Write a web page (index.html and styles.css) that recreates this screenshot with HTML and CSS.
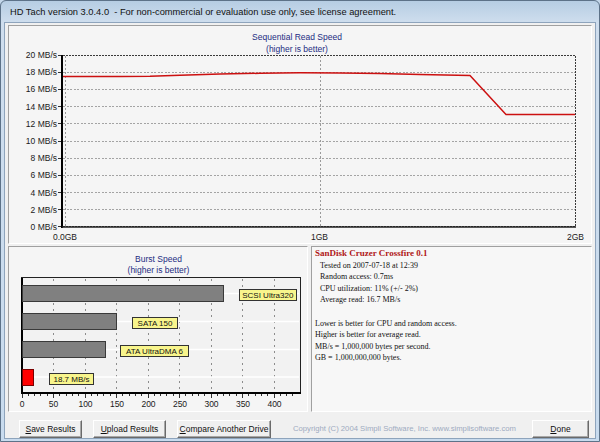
FILE: index.html
```html
<!DOCTYPE html>
<html>
<head>
<meta charset="utf-8">
<link rel="stylesheet" href="styles.css">
</head>
<body>
<div class="window">
  <div class="titlebar">HD Tach version 3.0.4.0 &nbsp;- For non-commercial or evaluation use only, see license agreement.</div>
  <div class="client">
    <div class="panel seq-panel">
      <svg class="chart" width="582" height="217" viewBox="9 26 582 217">
        <text class="chart-title" x="297" y="40">Sequential Read Speed</text>
        <text class="chart-title" x="297" y="52">(higher is better)</text>
        <g class="hgrid">
          <line x1="63" y1="72.5" x2="575" y2="72.5"/>
          <line x1="63" y1="89.5" x2="575" y2="89.5"/>
          <line x1="63" y1="106.5" x2="575" y2="106.5"/>
          <line x1="63" y1="123.5" x2="575" y2="123.5"/>
          <line x1="63" y1="141.5" x2="575" y2="141.5"/>
          <line x1="63" y1="158.5" x2="575" y2="158.5"/>
          <line x1="63" y1="175.5" x2="575" y2="175.5"/>
          <line x1="63" y1="192.5" x2="575" y2="192.5"/>
          <line x1="63" y1="209.5" x2="575" y2="209.5"/>
        </g>
        <g class="vgrid">
          <line x1="65.5" y1="56" x2="65.5" y2="226"/>
          <line x1="320.5" y1="56" x2="320.5" y2="226"/>
        </g>
        <rect class="plot-border" x="62.5" y="55.5" width="512.5" height="171"/>
        <line class="axis" x1="62" y1="55" x2="62" y2="228"/>
        <line class="axis-thin" x1="62" y1="227" x2="576" y2="227"/>
        <g class="ticks">
          <line x1="57.5" y1="55.5" x2="61" y2="55.5"/>
          <line x1="57.5" y1="72.5" x2="61" y2="72.5"/>
          <line x1="57.5" y1="89.5" x2="61" y2="89.5"/>
          <line x1="57.5" y1="106.5" x2="61" y2="106.5"/>
          <line x1="57.5" y1="123.5" x2="61" y2="123.5"/>
          <line x1="57.5" y1="141.5" x2="61" y2="141.5"/>
          <line x1="57.5" y1="158.5" x2="61" y2="158.5"/>
          <line x1="57.5" y1="175.5" x2="61" y2="175.5"/>
          <line x1="57.5" y1="192.5" x2="61" y2="192.5"/>
          <line x1="57.5" y1="209.5" x2="61" y2="209.5"/>
          <line x1="57.5" y1="226.5" x2="61" y2="226.5"/>
        </g>
        <g class="ylabels">
          <text x="57" y="58">20 MB/s</text>
          <text x="57" y="75.2">18 MB/s</text>
          <text x="57" y="92.4">16 MB/s</text>
          <text x="57" y="109.6">14 MB/s</text>
          <text x="57" y="126.8">12 MB/s</text>
          <text x="57" y="144">10 MB/s</text>
          <text x="57" y="161.2">8 MB/s</text>
          <text x="57" y="178.4">6 MB/s</text>
          <text x="57" y="195.6">4 MB/s</text>
          <text x="57" y="212.8">2 MB/s</text>
          <text x="57" y="230">0 MB/s</text>
        </g>
        <g class="xlabels">
          <text x="65" y="240">0.0GB</text>
          <text x="319.5" y="240">1GB</text>
          <text x="575.5" y="240">2GB</text>
        </g>
        <polyline class="read-line" points="63,76.6 120,76.5 150,76.2 180,75.2 220,74 260,73.3 300,72.8 340,72.9 380,73.6 420,74.4 470,75.6 506,114.5 575,114.5"/>
      </svg>
    </div>
    <div class="middle">
      <div class="panel burst-panel">
        <svg class="chart" width="298" height="164" viewBox="9 247 298 164">
          <text class="chart-title" x="158.5" y="261.5">Burst Speed</text>
          <text class="chart-title" x="158.5" y="273">(higher is better)</text>
          <rect class="burst-bg" x="22" y="278" width="278" height="115"/>
          <g class="vgrid burst-grid">
            <line x1="53.5" y1="279" x2="53.5" y2="392"/>
            <line x1="85.5" y1="279" x2="85.5" y2="392"/>
            <line x1="116.5" y1="279" x2="116.5" y2="392"/>
            <line x1="148.5" y1="279" x2="148.5" y2="392"/>
            <line x1="179.5" y1="279" x2="179.5" y2="392"/>
            <line x1="211.5" y1="279" x2="211.5" y2="392"/>
            <line x1="242.5" y1="279" x2="242.5" y2="392"/>
            <line x1="274.5" y1="279" x2="274.5" y2="392"/>
          </g>
          <g class="hwhite">
            <line x1="22" y1="293.5" x2="299" y2="293.5"/>
            <line x1="22" y1="321.5" x2="299" y2="321.5"/>
            <line x1="22" y1="349.5" x2="299" y2="349.5"/>
            <line x1="22" y1="377" x2="299" y2="377"/>
          </g>
          <rect class="burst-border" x="21.5" y="277.5" width="278.5" height="115.5"/>
          <line class="axis" x1="22" y1="277.5" x2="22" y2="394"/>
          <line class="axis" x1="21" y1="393" x2="300.5" y2="393"/>
          <rect class="bar" x="22.5" y="285.5" width="201" height="16"/>
          <rect class="bar" x="22.5" y="313.5" width="94" height="16"/>
          <rect class="bar" x="22.5" y="341.5" width="83" height="16"/>
          <rect class="bar bar-red" x="22.5" y="369.5" width="11" height="15.5"/>
          <rect class="tag" x="239.5" y="289.5" width="56.5" height="11"/>
          <text class="tag-text" x="267.8" y="298.2">SCSI Ultra320</text>
          <rect class="tag" x="132.5" y="317.5" width="45" height="11"/>
          <text class="tag-text" x="155" y="326.2">SATA 150</text>
          <rect class="tag" x="120.5" y="345.5" width="68" height="11"/>
          <text class="tag-text" x="154.5" y="354.2">ATA UltraDMA 6</text>
          <rect class="tag" x="49.5" y="373.5" width="44" height="11"/>
          <text class="tag-text" x="71.5" y="382.2">18.7 MB/s</text>
          <g class="ticks">
            <line x1="22" y1="394" x2="22" y2="397.5"/>
            <line x1="28.3" y1="394" x2="28.3" y2="396"/>
            <line x1="34.6" y1="394" x2="34.6" y2="396"/>
            <line x1="40.9" y1="394" x2="40.9" y2="396"/>
            <line x1="47.2" y1="394" x2="47.2" y2="396"/>
            <line x1="53.5" y1="394" x2="53.5" y2="397.5"/>
            <line x1="59.8" y1="394" x2="59.8" y2="396"/>
            <line x1="66.1" y1="394" x2="66.1" y2="396"/>
            <line x1="72.4" y1="394" x2="72.4" y2="396"/>
            <line x1="78.7" y1="394" x2="78.7" y2="396"/>
            <line x1="85.5" y1="394" x2="85.5" y2="397.5"/>
            <line x1="91.3" y1="394" x2="91.3" y2="396"/>
            <line x1="97.6" y1="394" x2="97.6" y2="396"/>
            <line x1="103.9" y1="394" x2="103.9" y2="396"/>
            <line x1="110.2" y1="394" x2="110.2" y2="396"/>
            <line x1="116.5" y1="394" x2="116.5" y2="397.5"/>
            <line x1="122.8" y1="394" x2="122.8" y2="396"/>
            <line x1="129.1" y1="394" x2="129.1" y2="396"/>
            <line x1="135.4" y1="394" x2="135.4" y2="396"/>
            <line x1="141.7" y1="394" x2="141.7" y2="396"/>
            <line x1="148.5" y1="394" x2="148.5" y2="397.5"/>
            <line x1="154.3" y1="394" x2="154.3" y2="396"/>
            <line x1="160.6" y1="394" x2="160.6" y2="396"/>
            <line x1="166.9" y1="394" x2="166.9" y2="396"/>
            <line x1="173.2" y1="394" x2="173.2" y2="396"/>
            <line x1="179.5" y1="394" x2="179.5" y2="397.5"/>
            <line x1="185.8" y1="394" x2="185.8" y2="396"/>
            <line x1="192.1" y1="394" x2="192.1" y2="396"/>
            <line x1="198.4" y1="394" x2="198.4" y2="396"/>
            <line x1="204.7" y1="394" x2="204.7" y2="396"/>
            <line x1="211.5" y1="394" x2="211.5" y2="397.5"/>
            <line x1="217.3" y1="394" x2="217.3" y2="396"/>
            <line x1="223.6" y1="394" x2="223.6" y2="396"/>
            <line x1="229.9" y1="394" x2="229.9" y2="396"/>
            <line x1="236.2" y1="394" x2="236.2" y2="396"/>
            <line x1="242.5" y1="394" x2="242.5" y2="397.5"/>
            <line x1="248.8" y1="394" x2="248.8" y2="396"/>
            <line x1="255.1" y1="394" x2="255.1" y2="396"/>
            <line x1="261.4" y1="394" x2="261.4" y2="396"/>
            <line x1="267.7" y1="394" x2="267.7" y2="396"/>
            <line x1="274.5" y1="394" x2="274.5" y2="397.5"/>
            <line x1="280.3" y1="394" x2="280.3" y2="396"/>
            <line x1="286.6" y1="394" x2="286.6" y2="396"/>
            <line x1="292.9" y1="394" x2="292.9" y2="396"/>
          </g>
          <g class="xlabels">
            <text x="22" y="406.5">0</text>
            <text x="53.5" y="406.5">50</text>
            <text x="85.5" y="406.5">100</text>
            <text x="117" y="406.5">150</text>
            <text x="148.5" y="406.5">200</text>
            <text x="180" y="406.5">250</text>
            <text x="211.5" y="406.5">300</text>
            <text x="243" y="406.5">350</text>
            <text x="274.5" y="406.5">400</text>
          </g>
        </svg>
      </div>
      <div class="panel info-panel">
        <div class="info-title">SanDisk Cruzer Crossfire 0.1</div>
        <div class="info-line indent">Tested on 2007-07-18 at 12:39</div>
        <div class="info-line indent">Random access: 0.7ms</div>
        <div class="info-line indent">CPU utilization: 11% (+/- 2%)</div>
        <div class="info-line indent">Average read: 16.7 MB/s</div>
        <div class="info-line blank"></div>
        <div class="info-line">Lower is better for CPU and random access.</div>
        <div class="info-line">Higher is better for average read.</div>
        <div class="info-line">MB/s = 1,000,000 bytes per second.</div>
        <div class="info-line">GB = 1,000,000,000 bytes.</div>
      </div>
    </div>
    <div class="footer">
      <button class="btn btn-save"><u>S</u>ave Results</button>
      <button class="btn btn-upload"><u>U</u>pload Results</button>
      <button class="btn btn-compare"><u>C</u>ompare Another Drive</button>
      <span class="copyright">Copyright (C) 2004 Simpli Software, Inc. www.simplisoftware.com</span>
      <button class="btn btn-done"><u>D</u>one</button>
    </div>
  </div>
</div>
</body>
</html>
```

FILE: styles.css
```css
html, body {
  margin: 0;
  padding: 0;
  background: #c4d7ea;
}

.window {
  width: 600px;
  height: 442px;
  box-sizing: border-box;
  display: flex;
  flex-direction: column;
  background: linear-gradient(#b6cde3, #cfdeee 22px, #c8dbee);
  border: 1px solid #5d7288;
  border-radius: 6px 6px 0 0;
  padding: 0 3px 2px 3px;
  font-family: "Liberation Sans", Arial, sans-serif;
}

.titlebar {
  height: 21px;
  line-height: 23px;
  padding-left: 6px;
  font-family: "Liberation Sans", Arial, sans-serif;
  font-size: 9.3px;
  color: #111;
  white-space: nowrap;
}

.client {
  flex: 1;
  background: #f0f0f0;
  border: 1px solid #8ea4bc;
  display: flex;
  flex-direction: column;
  padding: 2px 3px 0 3px;
}

.panel {
  box-sizing: border-box;
  border: 1px solid;
  border-color: #a0a0a0 #ffffff #ffffff #a0a0a0;
  background: #f5f5f5;
}

.seq-panel {
  height: 219px;
}

.chart {
  display: block;
}

.chart text {
  font-family: "Liberation Sans", Arial, sans-serif;
  font-size: 8.5px;
  fill: #1a1a1a;
}

.chart .chart-title {
  text-anchor: middle;
  fill: #232c82;
}

.ylabels text {
  text-anchor: end;
}

.xlabels text {
  text-anchor: middle;
}

.hgrid line {
  stroke: #a4a4a4;
  stroke-width: 1;
  stroke-dasharray: 2 1.5;
  shape-rendering: crispEdges;
}

.vgrid line {
  stroke: #9a9a9a;
  stroke-width: 1;
  stroke-dasharray: 2 2;
  shape-rendering: crispEdges;
}

.burst-grid line {
  stroke: #8c8c8c;
  stroke-dasharray: 2 4;
}

.plot-border {
  fill: none;
  stroke: #3a3a3a;
  stroke-width: 1;
  stroke-dasharray: 2 1;
  shape-rendering: crispEdges;
}

.axis {
  stroke: #000;
  stroke-width: 2;
  shape-rendering: crispEdges;
}

.axis-thin {
  stroke: #202020;
  stroke-width: 1.5;
}

.ticks line {
  stroke: #333;
  stroke-width: 1;
  shape-rendering: crispEdges;
}

.read-line {
  fill: none;
  stroke: #cc1010;
  stroke-width: 1.5;
  stroke-linejoin: round;
}

.middle {
  display: flex;
  gap: 3px;
  margin-top: 2px;
  height: 166px;
}

.burst-panel {
  width: 300px;
  flex: none;
}

.burst-bg {
  fill: #f2f2f2;
}

.hwhite line {
  stroke: #ffffff;
  stroke-width: 1.5;
}

.burst-border {
  fill: none;
  stroke: #222;
  stroke-width: 1;
  shape-rendering: crispEdges;
}

.bar {
  fill: #808080;
  stroke: #3a3a3a;
  stroke-width: 1;
  shape-rendering: crispEdges;
}

.bar-red {
  fill: #ff0000;
  stroke: #7a0000;
}

.tag {
  fill: #f8f58c;
  stroke: #333;
  stroke-width: 1;
  shape-rendering: crispEdges;
}

.chart .tag-text {
  text-anchor: middle;
  font-size: 8px;
  fill: #111;
}

.info-panel {
  flex: 1;
  background: #f7f7f7;
  padding: 1px 3px;
  font-family: "Liberation Serif", "Times New Roman", serif;
  font-size: 8px;
  color: #111;
}

.info-title {
  height: 11.6px;
  line-height: 11.6px;
  font-weight: bold;
  font-size: 9px;
  color: #b01818;
  white-space: nowrap;
}

.info-line {
  height: 11.6px;
  line-height: 11.6px;
  white-space: nowrap;
}

.info-line.indent {
  padding-left: 5px;
}

.footer {
  flex: 1;
  display: flex;
  align-items: flex-start;
  padding: 8px 3px 0 11px;
}

.btn {
  height: 18px;
  box-sizing: border-box;
  margin: 0;
  padding: 0;
  background: #f0f0f0;
  border: 1px solid;
  border-color: #ffffff #6a6a6a #6a6a6a #ffffff;
  box-shadow: inset -1px -1px 0 #a8a8a8;
  font-family: "Liberation Sans", Arial, sans-serif;
  font-size: 8.5px;
  color: #111;
  text-align: center;
}

.btn-save {
  width: 63px;
}

.btn-upload {
  width: 73px;
  margin-left: 11px;
}

.btn-compare {
  width: 94px;
  margin-left: 11px;
}

.btn-done {
  width: 57px;
  margin-left: auto;
}

.copyright {
  margin-left: 22px;
  line-height: 18px;
  font-size: 7.7px;
  color: #9eabc0;
  white-space: nowrap;
}
```
